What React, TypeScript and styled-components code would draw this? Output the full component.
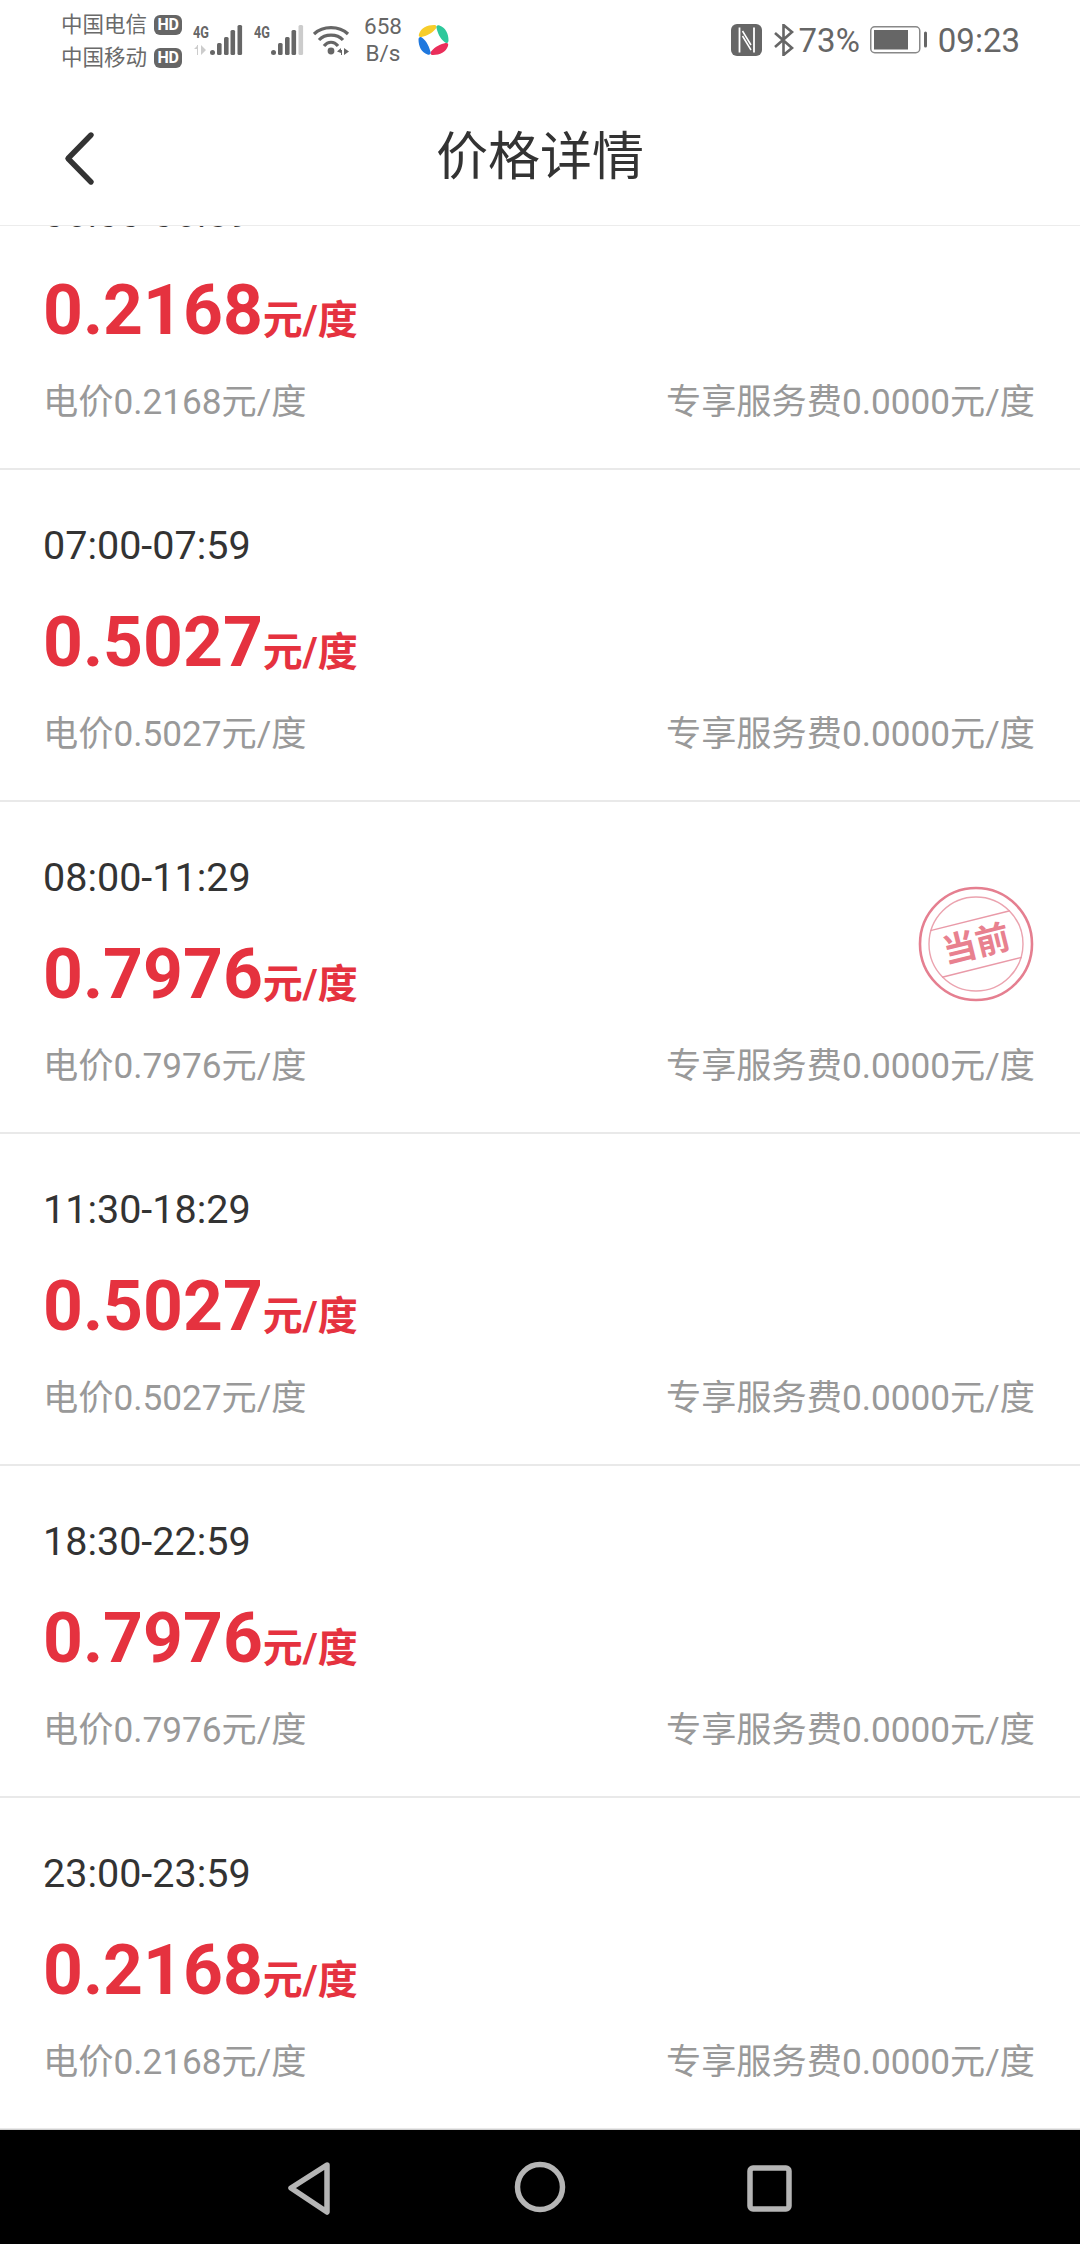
import React from "react";
import styled, { createGlobalStyle } from "styled-components";

const Global = createGlobalStyle`
  html, body { margin: 0; padding: 0; background: #fff; }
  body { font-family: Roboto, "Noto Sans CJK SC", sans-serif; }
`;

const Page = styled.div`
  width: 1080px;
  height: 2244px;
  display: flex;
  flex-direction: column;
  background: #fff;
  overflow: hidden;
`;

const StatusBar = styled.div`
  height: 80px;
  flex: none;
  display: flex;
  align-items: center;
  justify-content: space-between;
  padding: 0 60px 0 61px;
  box-sizing: border-box;
  color: #666;
`;
const StatusGroup = styled.div`
  display: flex;
  align-items: center;
`;
const Carriers = styled.div`
  display: flex;
  flex-direction: column;
  gap: 9px;
  width: 132px;
  padding-top: 2px;
`;
const Carrier = styled.div`
  display: flex;
  align-items: center;
  gap: 7px;
  font-size: 21.5px;
  line-height: 24px;
  color: #6a6a6a;
  white-space: nowrap;
`;
const HdBadge = styled.span`
  width: 28px;
  height: 20px;
  border-radius: 6px;
  background: #666;
  color: #fff;
  font-size: 16px;
  font-weight: 700;
  line-height: 20px;
  text-align: center;
  letter-spacing: -0.3px;
`;
const SignalIcon = styled.svg`
  margin-right: 11px;
`;
const WifiIcon = styled.svg`
  margin-left: -2px;
`;
const Speed = styled.div`
  width: 44px;
  margin: 0 12px 0 11px;
  text-align: center;
  font-size: 22.5px;
  line-height: 27px;
  color: #666;
`;
const BluetoothIcon = styled.svg`
  margin-left: 12px;
`;
const Percent = styled.span`
  font-size: 33px;
  margin: 0 10px 0 5px;
  color: #666;
`;
const Clock = styled.span`
  font-size: 33px;
  margin-left: 11px;
  color: #666;
`;

const Header = styled.header`
  height: 145px;
  flex: none;
  display: flex;
  align-items: center;
  justify-content: center;
  position: relative;
  border-bottom: 1px solid #ececec;
`;
const BackIcon = styled.svg`
  position: absolute;
  left: 60px;
  top: 51px;
`;
const Title = styled.h1`
  margin: 0 0 1px;
  font-size: 52px;
  font-weight: 400;
  color: #333;
  font-family: "Noto Sans CJK SC", sans-serif;
`;

const List = styled.div`
  flex: 1;
  min-height: 0;
  overflow: hidden;
`;
const Row = styled.div<{ $clipped?: boolean }>`
  position: relative;
  box-sizing: border-box;
  height: 332px;
  padding: 0 45px 0 43px;
  border-bottom: 2px solid #e9e9e9;
  margin-top: ${(p) => (p.$clipped ? "-88px" : "0")};
  display: flex;
  flex-direction: column;
`;
const Time = styled.div`
  margin-top: 53px;
  height: 46px;
  line-height: 46px;
  font-size: 39.5px;
  color: #333;
`;
const PriceLine = styled.div`
  margin-top: 31px;
  height: 84px;
  line-height: 84px;
  color: #e5323f;
  white-space: nowrap;
`;
const Price = styled.span`
  font-size: 69.6px;
  font-weight: 700;
`;
const Unit = styled.span`
  font-size: 40px;
  font-weight: 700;
`;
const SubLine = styled.div`
  margin-top: 27px;
  display: flex;
  justify-content: space-between;
  font-size: 35.2px;
  line-height: 46px;
  color: #999;
`;
const StampIcon = styled.svg`
  position: absolute;
  right: 46px;
  top: 84px;
`;
const StampText = styled.text`
  font-family: "Noto Sans CJK SC", sans-serif;
  font-size: 34px;
  font-weight: 700;
  fill: #e8818f;
`;

const NavBar = styled.nav`
  height: 115px;
  flex: none;
  background: #000;
  border-top: 1px solid #cfcfcf;
  box-sizing: border-box;
`;
const NavIcons = styled.svg`
  display: block;
`;

const Signal = ({ last, arrows }: { last: string; arrows: boolean }) => (
  <SignalIcon width="50" height="32" viewBox="0 0 50 32">
    <text x="0" y="14" fontFamily="Roboto" fontWeight="700" fontSize="17" fill="#666" textLength="16" lengthAdjust="spacingAndGlyphs">
      4G
    </text>
    {arrows && <path d="M1 25l3-3v-1h1v10H4v-6zM8 21l5 5-5 5z" fill="#ccc" />}
    <rect x="17" y="26" width="5" height="5" rx="2.5" fill="#666" />
    <rect x="24" y="19" width="4.6" height="12" rx="1.5" fill="#666" />
    <rect x="31" y="13" width="4.6" height="18" rx="1.5" fill="#666" />
    <rect x="37.5" y="6" width="4.6" height="25" rx="1.5" fill="#666" />
    <rect x="44.5" y="1" width="4.6" height="30" rx="1.5" fill={last} />
  </SignalIcon>
);

const Wifi = () => (
  <WifiIcon width="37" height="29" viewBox="0 0 37 29" fill="none">
    <path d="M1 8C10 -0.5 26 -0.5 35 8" stroke="#666" strokeWidth="3.2" />
    <path d="M6 14C12 7.5 24 7.5 30 14" stroke="#666" strokeWidth="3.2" />
    <path d="M11 20C15 15 21 15 25 20" stroke="#666" strokeWidth="3.2" />
    <circle cx="18" cy="25" r="3.4" fill="#666" />
    <path d="M24 25.5l4-3.5v2h1v5h-1v-2zM31 22l5 3.5-5 3.5z" fill="#666" />
  </WifiIcon>
);

const bladeColors = ["#f7cd2b", "#2ec89b", "#ea2e5a", "#1f78de"];
const Swirl = () => (
  <svg width="33" height="32" viewBox="0 0 33 32">
    {bladeColors.map((c, i) => (
      <path
        key={c}
        transform={`rotate(${i * 90} 16.5 16)`}
        d="M2 10C4 4 10 1 17 1C19.5 1 20.5 3 18.5 5C15 9.5 9 12 4.5 13C2 13.4 1.4 12 2 10Z"
        fill={c}
      />
    ))}
  </svg>
);

const Nfc = () => (
  <svg width="31" height="32" viewBox="0 0 31 32" fill="none">
    <rect width="31" height="32" rx="6" fill="#666" />
    <path d="M8.5 3.5v25M23 3.5v25" stroke="#fff" strokeWidth="1.8" />
    <path d="M11.5 7l8.5 14M11.5 12l8.5 14" stroke="#fff" strokeWidth="1.5" />
  </svg>
);

const Bluetooth = () => (
  <BluetoothIcon width="20" height="32" viewBox="0 0 20 32" fill="none" stroke="#666" strokeWidth="2.6">
    <path d="M1 9l17 15-8.5 7V1L18 8 1 23" />
  </BluetoothIcon>
);

const Battery = () => (
  <svg width="57" height="28" viewBox="0 0 57 28">
    <rect x="0.75" y="0.75" width="49" height="26" rx="4" fill="none" stroke="#888" strokeWidth="1.5" />
    <rect x="4" y="4" width="34" height="19.5" fill="#666" />
    <rect x="54" y="5.5" width="3" height="16" rx="1.5" fill="#666" />
  </svg>
);

const Stamp = () => (
  <StampIcon width="116" height="116" viewBox="0 0 116 116" fill="none">
    <circle cx="58" cy="58" r="56" stroke="#e57f90" strokeWidth="2.6" />
    <circle cx="58" cy="58" r="47" stroke="#eba3af" strokeWidth="1.4" />
    <g transform="rotate(-14 58 58)">
      <line x1="17" y1="34" x2="99" y2="34" stroke="#e99aa8" strokeWidth="1.4" />
      <line x1="17" y1="82" x2="99" y2="82" stroke="#e99aa8" strokeWidth="1.4" />
      <StampText x="58" y="70" textAnchor="middle">当前</StampText>
    </g>
  </StampIcon>
);

const rows = [
  { time: "06:00-06:59", price: "0.2168", clipped: true },
  { time: "07:00-07:59", price: "0.5027" },
  { time: "08:00-11:29", price: "0.7976", current: true },
  { time: "11:30-18:29", price: "0.5027" },
  { time: "18:30-22:59", price: "0.7976" },
  { time: "23:00-23:59", price: "0.2168" },
];

export default function App() {
  return (
    <Page>
      <Global />
      <StatusBar>
        <StatusGroup>
          <Carriers>
            <Carrier>中国电信<HdBadge>HD</HdBadge></Carrier>
            <Carrier>中国移动<HdBadge>HD</HdBadge></Carrier>
          </Carriers>
          <Signal last="#666" arrows />
          <Signal last="#ccc" arrows={false} />
          <Wifi />
          <Speed>658<br />B/s</Speed>
          <Swirl />
        </StatusGroup>
        <StatusGroup>
          <Nfc />
          <Bluetooth />
          <Percent>73%</Percent>
          <Battery />
          <Clock>09:23</Clock>
        </StatusGroup>
      </StatusBar>
      <Header>
        <BackIcon width="36" height="56" viewBox="0 0 36 56" fill="none">
          <path d="M31 4L8 27.5 31 51" stroke="#333" strokeWidth="5.4" strokeLinecap="round" strokeLinejoin="round" />
        </BackIcon>
        <Title>价格详情</Title>
      </Header>
      <List>
        {rows.map((r) => (
          <Row key={r.time} $clipped={r.clipped}>
            <Time>{r.time}</Time>
            <PriceLine>
              <Price>{r.price}</Price>
              <Unit>元/度</Unit>
            </PriceLine>
            <SubLine>
              <span>电价{r.price}元/度</span>
              <span>专享服务费0.0000元/度</span>
            </SubLine>
            {r.current && <Stamp />}
          </Row>
        ))}
      </List>
      <NavBar>
        <NavIcons width="1080" height="114" viewBox="0 0 1080 114" fill="none" stroke="#b5b5b5" strokeWidth="5.5" strokeLinejoin="round">
          <path d="M327 35L291 58l36 24z" />
          <circle cx="540" cy="57" r="22.5" />
          <rect x="750" y="38" width="39" height="41" rx="3" />
        </NavIcons>
      </NavBar>
    </Page>
  );
}
